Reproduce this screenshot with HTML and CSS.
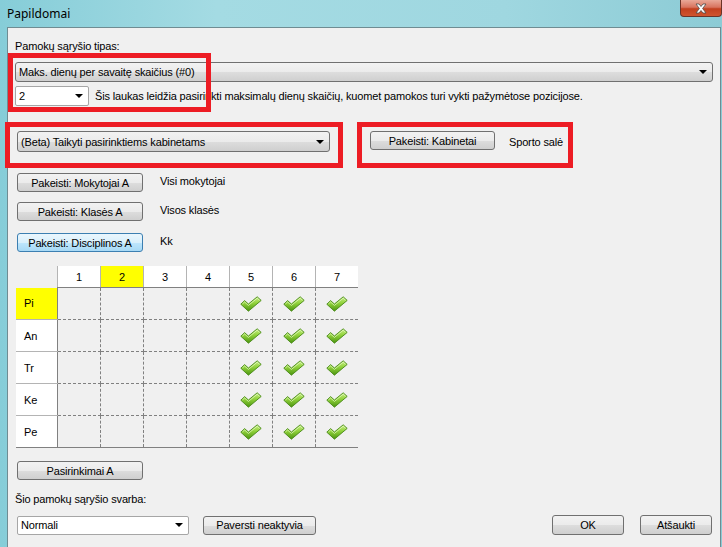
FILE: index.html
```html
<!DOCTYPE html>
<html lang="lt">
<head>
    <meta charset="UTF-8">
    <title>Papildomai</title>
    <link rel="stylesheet" href="styles.css">
</head>
<body>
    <svg class="sprite" width="0" height="0">
        <defs>
            <linearGradient id="chk-fill" x1="0" y1="0" x2="0" y2="1">
                <stop offset="0" stop-color="#c8f084"/>
                <stop offset="0.45" stop-color="#8fd13a"/>
                <stop offset="1" stop-color="#4b9410"/>
            </linearGradient>
            <symbol id="chk" viewBox="0 0 22 16">
                <path d="M0.8 8.2 L4.6 4.6 L8.4 8 L17.2 0.8 L21.2 4.4 L8.4 15.2 Z" fill="url(#chk-fill)" stroke="#4a8a1a" stroke-width="0.9" stroke-linejoin="round"/>
                <path d="M2.4 8 L4.6 6 L8.4 9.4 L17.2 2.2 L19.6 4.3" fill="none" stroke="#ecfcd0" stroke-width="0.9" opacity="0.75"/>
            </symbol>
        </defs>
    </svg>

    <div class="window">
        <div class="titlebar">
            <span class="title">Papildomai</span>
            <div class="close">
                <svg width="14" height="11" viewBox="0 0 14 11">
                    <path d="M2 1 L5 1 L7 3.5 L9 1 L12 1 L8.6 5.5 L12 10 L9 10 L7 7.5 L5 10 L2 10 L5.4 5.5 Z" fill="#fff" stroke="#4a4a4a" stroke-width="0.8" stroke-linejoin="round"/>
                </svg>
            </div>
        </div>

        <div class="client">
            <div class="label first">Pamokų sąryšio tipas:</div>
            <div class="combo wide">
                <span>Maks. dienų per savaitę skaičius (#0)</span>
                <span class="arrow"></span>
            </div>
            <div class="row">
                <div class="combo edit small">
                    <span>2</span>
                    <span class="arrow"></span>
                </div>
                <span class="hint">Šis laukas leidžia pasirinkti maksimalų dienų skaičių, kuomet pamokos turi vykti pažymėtose pozicijose.</span>
            </div>

            <div class="row beta-row">
                <div class="combo beta">
                    <span>(Beta) Taikyti pasirinktiems kabinetams</span>
                    <span class="arrow"></span>
                </div>
                <button class="btn rooms">Pakeisti: Kabinetai</button>
                <span class="value">Sporto salė</span>
            </div>

            <div class="row pick first-pick">
                <button class="btn side">Pakeisti: Mokytojai A</button>
                <span class="value">Visi mokytojai</span>
            </div>
            <div class="row pick">
                <button class="btn side">Pakeisti: Klasės A</button>
                <span class="value">Visos klasės</span>
            </div>
            <div class="row pick last-pick">
                <button class="btn side focused">Pakeisti: Disciplinos A</button>
                <span class="value">Kk</span>
            </div>

            <table class="grid">
                <tr class="head">
                    <th class="corner"></th>
                    <th>1</th>
                    <th class="mark">2</th>
                    <th>3</th>
                    <th>4</th>
                    <th>5</th>
                    <th>6</th>
                    <th>7</th>
                </tr>
                <tr>
                    <th class="day mark">Pi</th>
                    <td></td><td></td><td></td><td></td>
                    <td><svg class="tick"><use href="#chk"/></svg></td>
                    <td><svg class="tick"><use href="#chk"/></svg></td>
                    <td><svg class="tick"><use href="#chk"/></svg></td>
                </tr>
                <tr>
                    <th class="day">An</th>
                    <td></td><td></td><td></td><td></td>
                    <td><svg class="tick"><use href="#chk"/></svg></td>
                    <td><svg class="tick"><use href="#chk"/></svg></td>
                    <td><svg class="tick"><use href="#chk"/></svg></td>
                </tr>
                <tr>
                    <th class="day">Tr</th>
                    <td></td><td></td><td></td><td></td>
                    <td><svg class="tick"><use href="#chk"/></svg></td>
                    <td><svg class="tick"><use href="#chk"/></svg></td>
                    <td><svg class="tick"><use href="#chk"/></svg></td>
                </tr>
                <tr>
                    <th class="day">Ke</th>
                    <td></td><td></td><td></td><td></td>
                    <td><svg class="tick"><use href="#chk"/></svg></td>
                    <td><svg class="tick"><use href="#chk"/></svg></td>
                    <td><svg class="tick"><use href="#chk"/></svg></td>
                </tr>
                <tr class="last">
                    <th class="day">Pe</th>
                    <td></td><td></td><td></td><td></td>
                    <td><svg class="tick"><use href="#chk"/></svg></td>
                    <td><svg class="tick"><use href="#chk"/></svg></td>
                    <td><svg class="tick"><use href="#chk"/></svg></td>
                </tr>
            </table>

            <button class="btn side options">Pasirinkimai A</button>

            <div class="label weight">Šio pamokų sąryšio svarba:</div>
            <div class="row bottom">
                <div class="combo edit normal">
                    <span>Normali</span>
                    <span class="arrow"></span>
                </div>
                <button class="btn inactive">Paversti neaktyvia</button>
                <div class="spacer"></div>
                <button class="btn dlg">OK</button>
                <button class="btn dlg">Atšaukti</button>
            </div>

            <!-- annotation frames drawn over the dialog -->
            <div class="note-box box-type"></div>
            <div class="note-box box-beta"></div>
            <div class="note-box box-rooms"></div>
        </div>
    </div>
</body>
</html>
```

FILE: styles.css
```css
body {
    margin: 0;
    width: 722px;
    height: 547px;
    overflow: hidden;
    font-family: "Liberation Sans", Arial, sans-serif;
    font-size: 11px;
    letter-spacing: -0.15px;
    color: #000;
}
.sprite {
    position: absolute;
    width: 0;
    height: 0;
}
.window {
    width: 722px;
    height: 547px;
    display: flex;
    flex-direction: column;
    background: linear-gradient(90deg, #86cdd8 0%, #a4dbe3 30%, #9fd7e0 70%, #8ccbd5 100%);
}
.titlebar {
    height: 27px;
    display: flex;
    justify-content: space-between;
    align-items: flex-start;
    flex-shrink: 0;
}
.title {
    font-family: "Noto Sans", "Open Sans", sans-serif;
    font-size: 12px;
    letter-spacing: 0;
    margin: 5px 0 0 7px;
    color: #000;
}
.close {
    width: 42px;
    height: 17px;
    box-sizing: border-box;
    border: 1px solid #6b3328;
    border-top: none;
    border-radius: 0 0 4px 4px;
    background: linear-gradient(#e9a898 0%, #d8745f 45%, #c2401f 55%, #d0552f 100%);
    display: flex;
    align-items: center;
    justify-content: center;
}
.client {
    position: relative;
    flex: 1;
    margin: 0 1px 0 7px;
    padding-left: 7px;
    background: #f0f0f0;
    border: 1px solid #6f8c92;
    border-bottom: none;
    display: flex;
    flex-direction: column;
    align-items: flex-start;
}
.label {
    line-height: 14px;
}
.label.first {
    margin-top: 11px;
}
.row {
    display: flex;
    align-items: center;
}

/* combo boxes */
.combo {
    box-sizing: border-box;
    height: 20px;
    display: flex;
    align-items: center;
    justify-content: space-between;
    padding: 0 5px 0 3px;
    border: 1px solid #707070;
    border-radius: 3px;
    background: linear-gradient(#f2f2f2 0%, #ebebeb 50%, #dddddd 51%, #cfcfcf 100%);
}
.combo.edit {
    background: #fff;
    border-color: #a6a6a6;
    border-radius: 2px;
}
.arrow {
    width: 0;
    height: 0;
    border-left: 4px solid transparent;
    border-right: 4px solid transparent;
    border-top: 4px solid #000;
}
.combo.wide {
    width: 698px;
    margin-top: 9px;
}
.combo.small {
    width: 74px;
    margin-top: 4px;
}
.hint {
    margin: 4px 0 0 6px;
}
.beta-row {
    margin-top: 25px;
}
.combo.beta {
    width: 313px;
    height: 21px;
    margin-left: 2px;
}

/* buttons */
.btn {
    box-sizing: border-box;
    height: 19px;
    padding: 0;
    font-family: inherit;
    font-size: 11px;
    letter-spacing: inherit;
    color: #000;
    border: 1px solid #707070;
    border-radius: 3px;
    background: linear-gradient(#f2f2f2 0%, #ebebeb 50%, #dddddd 51%, #cfcfcf 100%);
}
.btn.focused {
    border-color: #3c7fb1;
    background: linear-gradient(#eaf6fd 0%, #d9f0fc 50%, #bee6fd 51%, #a7d9f5 100%);
}
.btn.rooms {
    width: 125px;
    margin: -2px 0 0 40px;
}
.value {
    margin-left: 14px;
}
.btn.side {
    width: 126px;
    margin-left: 2px;
}
.pick .value {
    margin: -4px 0 0 17px;
}
.first-pick {
    margin-top: 21px;
}
.pick + .pick {
    margin-top: 10px;
}
.last-pick {
    margin-top: 12px !important;
}

/* day / period grid */
.grid {
    margin: 14px 0 0 1px;
    border-collapse: collapse;
    table-layout: fixed;
}
.grid th,
.grid td {
    padding: 0;
    font-weight: normal;
}
.grid .head th {
    width: 42px;
    height: 21px;
    background: #fff;
    border-left: 1px solid #b4b4b4;
    border-bottom: 1px solid #808080;
    text-align: center;
}
.grid .head th.corner {
    width: 41px;
    background: transparent;
    border: none;
    border-bottom: none;
}
.grid .head th.mark,
.grid th.day.mark {
    background: #ffff00;
}
.grid th.day {
    height: 31px;
    background: #fff;
    text-align: left;
    padding-left: 8px;
    border-bottom: 1px solid #b4b4b4;
    border-right: 1px solid #808080;
}
.grid td {
    height: 31px;
    text-align: center;
    vertical-align: middle;
    border-right: 1px dashed #808080;
    border-bottom: 1px dashed #808080;
}
.grid td:last-child {
    border-right: none;
}
.grid tr.last td,
.grid tr.last th.day {
    border-bottom: 1px solid #808080;
}
.tick {
    display: block;
    width: 22px;
    height: 16px;
    margin: 0 auto;
}

.btn.options {
    margin-top: 13px;
}
.label.weight {
    margin-top: 12px;
}
.bottom {
    width: 697px;
    margin-top: 9px;
}
.combo.normal {
    width: 172px;
    height: 19px;
    margin-left: 2px;
}
.btn.inactive {
    width: 113px;
    margin-left: 14px;
}
.spacer {
    flex: 1;
}
.btn.dlg {
    width: 72px;
    height: 20px;
    margin-left: 16px;
}

/* red annotation frames */
.note-box {
    position: absolute;
    box-sizing: border-box;
    border: 5px solid #ed1c24;
}
.box-type {
    left: 0;
    top: 25px;
    width: 203px;
    height: 59px;
}
.box-beta {
    left: -3px;
    top: 94px;
    width: 338px;
    height: 46px;
}
.box-rooms {
    left: 349px;
    top: 94px;
    width: 216px;
    height: 46px;
}
```
